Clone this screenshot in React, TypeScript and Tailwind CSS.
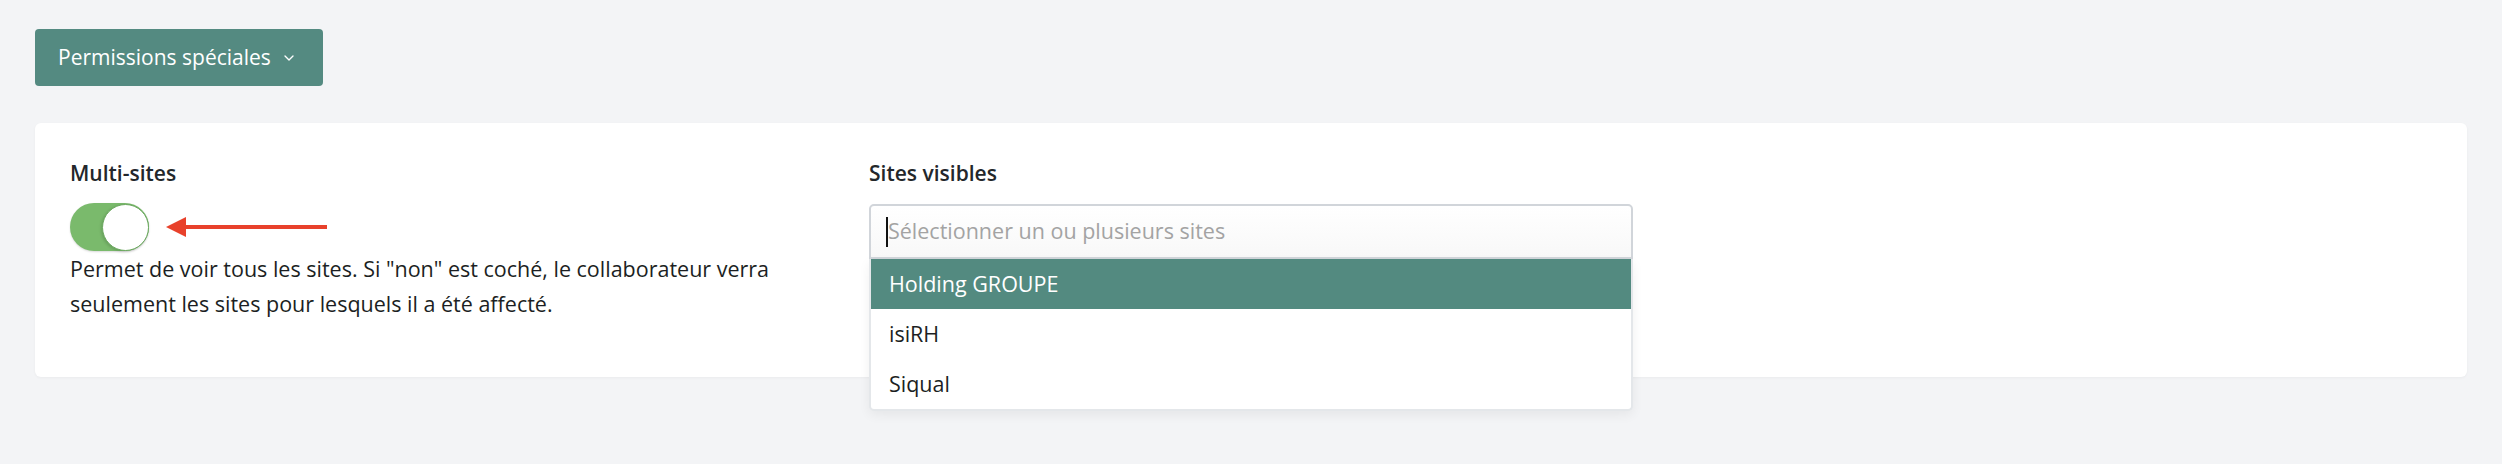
import { ChevronDown } from 'lucide-react';

const sites = ['Holding GROUPE', 'isiRH', 'Siqual'];

function Toggle() {
  return (
    <div className="flex h-[48px] w-[79px] items-center justify-end rounded-full bg-[#7aba6c] shadow-[0_1px_2px_rgba(0,0,0,0.15)]">
      <div className="h-[47px] w-[47px] rounded-full border border-[#6aa85e] bg-white shadow-[-1px_1px_3px_rgba(0,0,0,0.15)]" />
    </div>
  );
}

function Arrow() {
  return (
    <svg width="161" height="20" viewBox="0 0 161 20" className="block">
      <polygon points="0,10 20,0 20,20" fill="#e8412b" />
      <rect x="18" y="8" width="143" height="4" fill="#e8412b" />
    </svg>
  );
}

export default function App() {
  return (
    <div
      className="min-h-screen bg-[#f3f4f6] px-[35px] pt-[29px] text-[#1c1f23]"
      style={{ fontFamily: '"Open Sans", "Noto Sans", sans-serif' }}
    >
      <button className="flex h-[57px] w-[288px] items-center gap-[10px] rounded-[4px] bg-[#548a81] pl-[23px] text-[21px] text-white">
        Permissions spéciales
        <ChevronDown className="h-[16px] w-[16px]" strokeWidth={2} />
      </button>

      <div className="mt-[37px] grid h-[254px] grid-cols-3 gap-x-[35px] rounded-[6px] bg-white px-[35px] pt-[34px] shadow-[0_1px_3px_rgba(0,0,0,0.04)]">
        <div>
          <div className="text-[21px] font-semibold leading-[33px] text-[#23272b]">Multi-sites</div>
          <div className="mt-[13px] flex items-center gap-[17px]">
            <Toggle />
            <Arrow />
          </div>
          <p className="text-[21.5px] leading-[35px]">
            Permet de voir tous les sites. Si "non" est coché, le collaborateur verra seulement les sites pour lesquels il a été affecté.
          </p>
        </div>

        <div>
          <div className="text-[21px] font-semibold leading-[33px] text-[#23272b]">Sites visibles</div>
          <div className="relative mt-[14px]">
            <div className="flex h-[55px] items-center rounded-t-[5px] border-2 border-[#d1d5da] bg-gradient-to-b from-white to-[#f8f8f8] pl-[15px]">
              <span className="h-[30px] w-[2px] bg-[#111]" />
              <span className="text-[21.5px] text-[#a3a3a3]">Sélectionner un ou plusieurs sites</span>
            </div>
            <ul className="absolute left-0 right-0 top-full z-10 rounded-b-[5px] border-2 border-t-0 border-[#e4e7ea] bg-white shadow-[0_4px_12px_rgba(0,0,0,0.06)]">
              {sites.map((s, i) => (
                <li
                  key={s}
                  className={`flex h-[50px] items-center pl-[18px] text-[21.5px] ${
                    i === 0 ? 'bg-[#538a80] text-white' : 'text-[#1c1f23]'
                  }`}
                >
                  {s}
                </li>
              ))}
            </ul>
          </div>
        </div>

        <div />
      </div>
    </div>
  );
}
